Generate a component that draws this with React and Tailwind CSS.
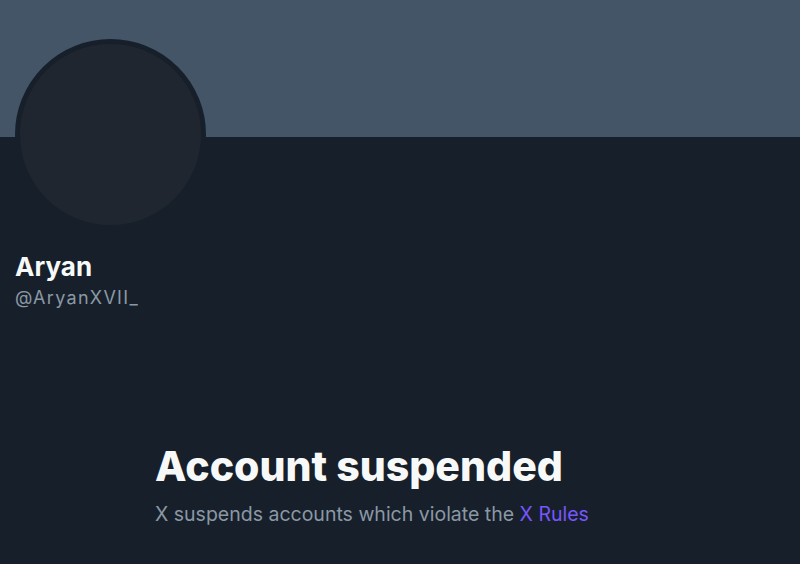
export default function App() {
  return (
    <div className="min-h-[564px] w-full overflow-hidden bg-[#17202a] font-['Inter','Liberation_Sans',sans-serif]">
      {/* Banner */}
      <div className="h-[137px] bg-[#435566]"></div>

      {/* Profile */}
      <div className="px-[15px]">
        <div className="-mt-[98px] h-[191px] w-[191px] rounded-full border-[5px] border-[#17202a] bg-[#1f2630]"></div>
        <div className="mt-[22px] text-[26px] leading-[30px] font-bold text-[#f7f9f9]">Aryan</div>
        <div className="mt-[5px] text-[18px] leading-[22px] tracking-[1.3px] text-[#8b98a5]">@AryanXVII_</div>
      </div>

      {/* Empty state */}
      <div className="mt-[133px] pl-[155px]">
        <h1 className="text-[41px] leading-[48px] font-extrabold text-[#f7f9f9]">Account suspended</h1>
        <p className="mt-[12px] text-[19.5px] leading-[24px] text-[#8b98a5]">
          X suspends accounts which violate the <span className="text-[#7856ff]">X Rules</span>
        </p>
      </div>
    </div>
  );
}
